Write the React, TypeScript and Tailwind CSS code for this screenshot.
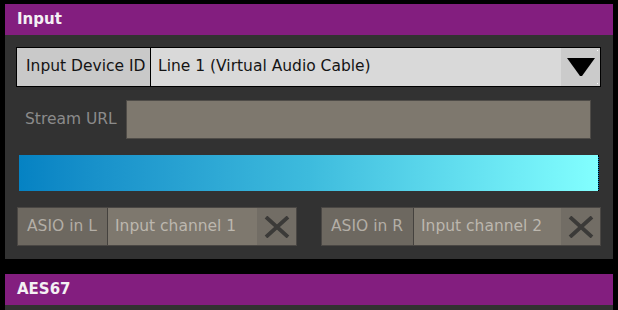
import { ReactNode } from "react";

const Header = ({ title }: { title: string }) => (
  <div className="h-[31px] bg-[#831e7f] pl-3 flex items-center text-[15px] font-bold text-[#f4f0f4]">
    {title}
  </div>
);

const CloseIcon = () => (
  <svg width="26" height="22" viewBox="0 0 26 22">
    <path d="M2 1 L24 21 M24 1 L2 21" stroke="#3b3a38" strokeWidth="3.8" />
  </svg>
);

const ChannelPicker = ({ label, value, labelWidth }: { label: string; value: string; labelWidth: string }) => (
  <div className="flex h-[39px] w-[280px] border border-[#4a4744]">
    <div className={`${labelWidth} shrink-0 bg-[#6d6860] border-r border-[#45423e] pl-[9px] flex items-center text-[#b3aea6]`}>
      {label}
    </div>
    <div className="flex-1 bg-[#7e786e] pl-[7px] flex items-center text-[#bcb7ae]">{value}</div>
    <button className="w-[39px] shrink-0 bg-[#726d65] flex items-center justify-center">
      <CloseIcon />
    </button>
  </div>
);

const Panel = ({ title, children }: { title: string; children?: ReactNode }) => (
  <section className="w-[608px]">
    <Header title={title} />
    <div className="bg-[#323232]">{children}</div>
  </section>
);

export default function App() {
  return (
    <div
      className="w-[618px] h-[310px] overflow-hidden bg-black pt-1 pl-[5px] text-[15.5px] leading-none"
      style={{ fontFamily: '"DejaVu Sans", Verdana, sans-serif' }}
    >
      <Panel title="Input">
        <div className="h-[224px] pt-3 pl-[11px] pr-3 flex flex-col">
          {/* device select */}
          <div className="flex h-[40px] w-[585px] border border-black text-[#141414]">
            <div className="w-[134px] shrink-0 bg-[#c9c9c9] border-r border-black pl-[9px] flex items-center">
              Input Device ID
            </div>
            <div className="flex-1 bg-[#d9d9d9] pl-[7px] flex items-center">Line 1 (Virtual Audio Cable)</div>
            <div className="relative w-[39px] shrink-0 bg-[#cbcbcb] flex items-center justify-center">
              <svg width="28" height="18" viewBox="0 0 28 18">
                <polygon points="0,0 28,0 15,18 13,18" fill="#000" />
              </svg>
              <span className="absolute top-[2px] right-[2px] w-px h-px bg-white" />
              <span className="absolute bottom-[2px] right-[2px] w-px h-px bg-white" />
            </div>
          </div>

          {/* stream url */}
          <div className="flex items-center mt-[13px] h-[39px]">
            <div className="w-[110px] shrink-0 pl-[9px] text-[#8b8b8b]">Stream URL</div>
            <div className="w-[465px] h-[39px] bg-[#7e786e] border border-[#4f4c48]" />
          </div>

          {/* level meter */}
          <div className="mt-4 ml-[3px] w-[580px] h-[36px] bg-gradient-to-r from-[#0582c3] via-[#3dbbdd] to-[#82ffff] border-r border-dotted border-black" />

          {/* asio channels */}
          <div className="mt-4 ml-px flex gap-[24px]">
            <ChannelPicker label="ASIO in L" value="Input channel 1" labelWidth="w-[90px]" />
            <ChannelPicker label="ASIO in R" value="Input channel 2" labelWidth="w-[92px]" />
          </div>
        </div>
      </Panel>

      <div className="mt-[15px]">
        <Panel title="AES67">
          <div className="h-[10px]" />
        </Panel>
      </div>
    </div>
  );
}
